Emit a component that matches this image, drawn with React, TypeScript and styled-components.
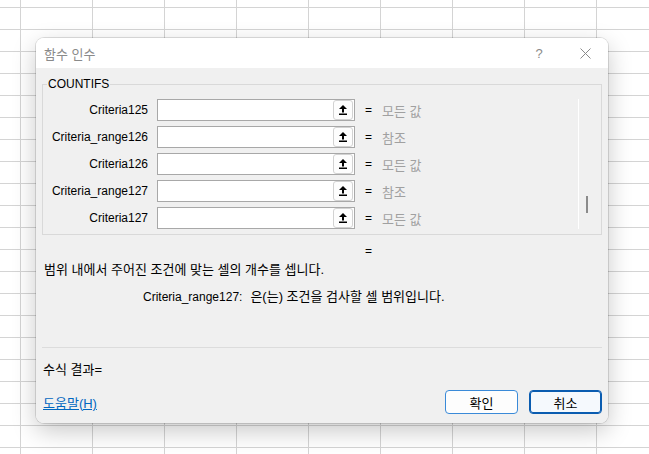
import styled, { createGlobalStyle } from 'styled-components'

const GlobalStyle = createGlobalStyle`
  html, body {
    margin: 0;
    padding: 0;
  }
  body {
    width: 649px;
    height: 454px;
    overflow: hidden;
    background-color: #fff;
    background-image:
      linear-gradient(to right, #d4d4d4 1px, transparent 1px),
      linear-gradient(to bottom, #d4d4d4 1px, transparent 1px);
    background-size: 72px 22px;
    background-position: 20px 7px;
    font-family: "Liberation Sans", "Noto Sans CJK KR", sans-serif;
    color: #000;
  }
`

const Desktop = styled.div`
  padding: 38px 0 0 36px;
`
const Dialog = styled.div`
  width: 572px;
  height: 385px;
  border-radius: 8px;
  overflow: hidden;
  display: flex;
  flex-direction: column;
  box-shadow: 0 0 0 1px rgba(0, 0, 0, 0.12), 0 8px 24px rgba(0, 0, 0, 0.22);
`
const TitleBar = styled.div`
  height: 30px;
  flex-shrink: 0;
  background: #fff;
  display: flex;
  align-items: center;
  padding-left: 8px;
`
const Title = styled.div`
  font-size: 13px;
  color: #8a8a8a;
`
const TitleButtons = styled.div`
  margin-left: auto;
  display: flex;
  height: 100%;
`
const TitleButton = styled.div`
  width: 46px;
  height: 100%;
  display: flex;
  align-items: center;
  justify-content: center;
  color: #8a8a8a;
  font-size: 13px;
`
const Body = styled.div`
  flex: 1;
  background: #f0f0f0;
  padding: 8px 6px 0 6px;
  display: flex;
  flex-direction: column;
  font-size: 12px;
`
const GroupBox = styled.fieldset`
  margin: 0;
  padding: 7px 0 5px 0;
  border: 1px solid #d9d9d9;
  min-width: 0;
`
const GroupLabel = styled.legend`
  padding: 0 1px;
  margin-left: 4px;
  font-size: 12px;
  line-height: 16px;
`
const GroupContent = styled.div`
  display: flex;
`
const ArgList = styled.div`
  flex: 1;
  display: flex;
  flex-direction: column;
  gap: 5px;
`
const ArgRow = styled.div`
  display: flex;
  align-items: center;
  height: 22px;
`
const ArgName = styled.div`
  width: 105px;
  margin-right: 9px;
  text-align: right;
  white-space: nowrap;
`
const InputBox = styled.div`
  width: 198px;
  height: 22px;
  box-sizing: border-box;
  border: 1px solid #a8a8a8;
  background: #fff;
  display: flex;
  align-items: center;
  justify-content: flex-end;
  padding-right: 1px;
`
const RefButton = styled.div`
  width: 20px;
  height: 20px;
  box-sizing: border-box;
  border: 1px solid #d2d2d2;
  border-radius: 3px;
  background: #fdfdfd;
  display: flex;
  align-items: center;
  justify-content: center;
`
const Eq = styled.div`
  margin-left: 10px;
  width: 7px;
`
const ArgValue = styled.div`
  margin-left: 10px;
  font-size: 13px;
  color: #a0a0a0;
`
const ScrollTrack = styled.div`
  width: 23px;
  box-sizing: border-box;
  border-left: 1px solid #fff;
  padding: 97px 0 0 7px;
`
const ScrollThumb = styled.div`
  width: 2px;
  height: 17px;
  background: #8b8b8b;
`
const ResultEq = styled.div`
  margin-top: 8px;
  padding-left: 323px;
  line-height: 16px;
`
const Description = styled.div`
  margin-top: 3px;
  padding-left: 2px;
  font-size: 13px;
  line-height: 16px;
`
const HelpLine = styled.div`
  margin-top: 11px;
  padding-left: 101px;
  display: flex;
  align-items: baseline;
  line-height: 16px;
`
const HelpText = styled.span`
  margin-left: 8px;
  font-size: 13px;
`
const Separator = styled.div`
  margin-top: 42px;
  height: 1px;
  background: #dcdcdc;
`
const FormulaResult = styled.div`
  margin-top: 14px;
  padding-left: 1px;
  font-size: 13px;
  line-height: 16px;
`
const Footer = styled.div`
  margin-top: 12px;
  display: flex;
  align-items: center;
`
const HelpLink = styled.a`
  padding-left: 1px;
  font-size: 13px;
  color: #0067c0;
  text-decoration: underline;
`
const Buttons = styled.div`
  margin-left: auto;
  display: flex;
  gap: 11px;
`
const Button = styled.div<{ $focused?: boolean }>`
  width: 73px;
  height: 24px;
  box-sizing: border-box;
  border-radius: 4px;
  border: 1px solid ${p => (p.$focused ? '#0a5cb0' : '#3a8ad8')};
  box-shadow: ${p => (p.$focused ? 'inset 0 0 0 1px #0a5cb0' : 'none')};
  background: ${p => (p.$focused ? '#f5f9fd' : '#fdfdfd')};
  display: flex;
  align-items: center;
  justify-content: center;
  font-size: 13px;
`

const args = [
  { name: 'Criteria125', value: '모든 값' },
  { name: 'Criteria_range126', value: '참조' },
  { name: 'Criteria126', value: '모든 값' },
  { name: 'Criteria_range127', value: '참조' },
  { name: 'Criteria127', value: '모든 값' },
]

function RefIcon() {
  return (
    <svg width="8" height="10" viewBox="0 0 8 10">
      <polygon points="4,0 0,4 8,4" fill="#000" />
      <rect x="3" y="3.5" width="2" height="4" fill="#000" />
      <rect x="0" y="8.5" width="8" height="1.5" fill="#000" />
    </svg>
  )
}

function CloseIcon() {
  return (
    <svg width="11" height="11" viewBox="0 0 11 11">
      <path d="M0.5 0.5 L10.5 10.5 M10.5 0.5 L0.5 10.5" stroke="#8a8a8a" strokeWidth="1" />
    </svg>
  )
}

export default function App() {
  return (
    <>
      <GlobalStyle />
      <Desktop>
        <Dialog>
          <TitleBar>
            <Title>함수 인수</Title>
            <TitleButtons>
              <TitleButton>?</TitleButton>
              <TitleButton><CloseIcon /></TitleButton>
            </TitleButtons>
          </TitleBar>
          <Body>
            <GroupBox>
              <GroupLabel>COUNTIFS</GroupLabel>
              <GroupContent>
                <ArgList>
                  {args.map((a, i) => (
                    <ArgRow key={i}>
                      <ArgName>{a.name}</ArgName>
                      <InputBox>
                        <RefButton><RefIcon /></RefButton>
                      </InputBox>
                      <Eq>=</Eq>
                      <ArgValue>{a.value}</ArgValue>
                    </ArgRow>
                  ))}
                </ArgList>
                <ScrollTrack>
                  <ScrollThumb />
                </ScrollTrack>
              </GroupContent>
            </GroupBox>
            <ResultEq>=</ResultEq>
            <Description>범위 내에서 주어진 조건에 맞는 셀의 개수를 셉니다.</Description>
            <HelpLine>
              <span>Criteria_range127:</span>
              <HelpText>은(는) 조건을 검사할 셀 범위입니다.</HelpText>
            </HelpLine>
            <Separator />
            <FormulaResult>수식 결과=</FormulaResult>
            <Footer>
              <HelpLink>도움말(H)</HelpLink>
              <Buttons>
                <Button>확인</Button>
                <Button $focused>취소</Button>
              </Buttons>
            </Footer>
          </Body>
        </Dialog>
      </Desktop>
    </>
  )
}
